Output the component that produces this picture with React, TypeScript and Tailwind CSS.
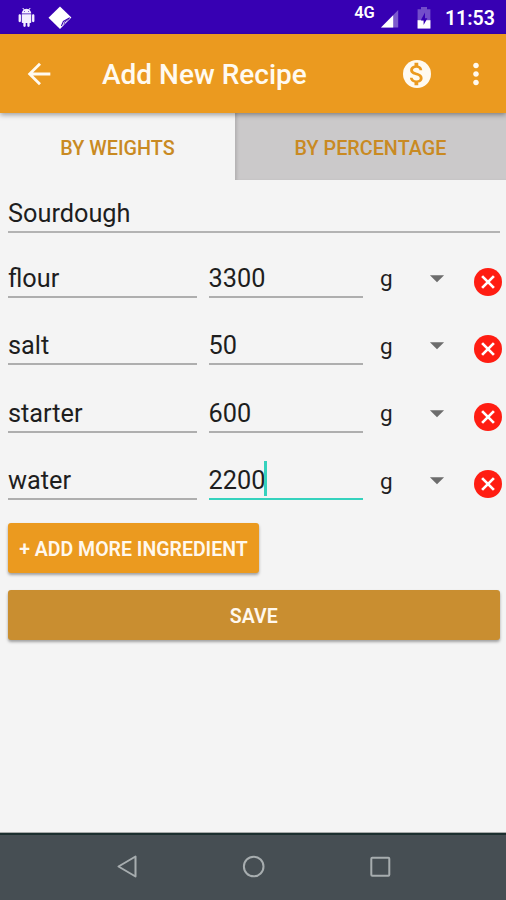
import { useState } from 'react'
import { MdArrowBack, MdArrowDropDown, MdAttachMoney, MdMoreVert } from 'react-icons/md'

const ingredients = [
  { name: 'flour', amount: '3300', unit: 'g' },
  { name: 'salt', amount: '50', unit: 'g' },
  { name: 'starter', amount: '600', unit: 'g' },
  { name: 'water', amount: '2200', unit: 'g' },
]

function StatusBar() {
  return (
    <div className="flex h-[34px] shrink-0 items-start bg-[#3700b3] text-white">
      {/* Notifications */}
      <svg viewBox="0 0 24 24" className="mt-[8px] ml-[16.5px] h-[19px] w-[19px]" fill="#f3efff">
        <path d="M6 18c0 .55.45 1 1 1h1v3.5c0 .83.67 1.5 1.5 1.5s1.5-.67 1.5-1.5V19h2v3.5c0 .83.67 1.5 1.5 1.5s1.5-.67 1.5-1.5V19h1c.55 0 1-.45 1-1V8H6v10zM3.5 8C2.67 8 2 8.67 2 9.5v7c0 .83.67 1.5 1.5 1.5S5 17.33 5 16.5v-7C5 8.67 4.33 8 3.5 8zm17 0c-.83 0-1.5.67-1.5 1.5v7c0 .83.67 1.5 1.5 1.5s1.5-.67 1.5-1.5v-7c0-.83-.67-1.5-1.5-1.5zm-4.97-5.84l1.3-1.3c.2-.2.2-.51 0-.71-.2-.2-.51-.2-.71 0l-1.48 1.48C13.85 1.23 12.95 1 12 1c-.96 0-1.86.23-2.66.63L7.85.15c-.2-.2-.51-.2-.71 0-.2.2-.2.51 0 .71l1.31 1.31C6.97 3.26 6 5.01 6 7h12c0-1.99-.97-3.75-2.47-4.84zM10 5H9V4h1v1zm5 0h-1V4h1v1z" />
      </svg>
      <svg viewBox="0 0 24 24" className="mt-[5.5px] ml-[12px] h-[24px] w-[24px]">
        <path d="M12 .5L23.4 11.4L12 23L.5 11.8z" fill="#fff" />
        <path d="M21.8 11.8L15.4 15.4L13.4 20" fill="none" stroke="#3700b3" strokeWidth="1.1" />
        <path d="M20.8 13.2L17 15.8L15.8 18.6" fill="none" stroke="#3700b3" strokeWidth=".8" />
      </svg>

      {/* Network, battery, clock */}
      <span className="mt-[4px] ml-auto text-[16.5px] leading-[18px] font-semibold">4G</span>
      <svg viewBox="0 0 18 18" className="mt-[9.5px] ml-[6.5px] h-[18px] w-[18px]">
        <path d="M17.2 0V17.5H0z" fill="#fff" fillOpacity=".35" />
        <path d="M12.2 5.2V17.5H0z" fill="#fff" />
      </svg>
      <svg viewBox="0 0 14 22" className="mt-[6.5px] ml-[17.5px] h-[22px] w-[14px]">
        <path d="M4 0h6v2.2h3.4V21.5H.6V2.2H4z" fill="#fff" fillOpacity=".3" />
        <path d="M.6 13.2h12.8v8.3H.6z" fill="#fff" />
        <path d="M8 5.5L4.2 12.6V13.6H6.6V18L10.4 11.2H8z" fill="#3700b3" />
      </svg>
      <span className="mt-[7px] mr-[11px] ml-[14px] text-[19.6px] leading-[24px] font-semibold">11:53</span>
    </div>
  )
}

function AppBar() {
  return (
    <header className="z-10 flex h-[79px] shrink-0 items-center bg-[#eb9a1f] text-[#fffaf0] shadow-[0_2px_5px_rgba(0,0,0,0.35)]">
      <MdArrowBack className="ml-[22px] h-[34px] w-[34px]" />
      <h1 className="mt-[2px] ml-[46px] text-[28px] leading-[34px] font-medium whitespace-nowrap">
        Add New Recipe
      </h1>
      <div className="mr-[28px] ml-auto flex h-[28px] w-[28px] items-center justify-center rounded-full bg-[#fffaf0]">
        <MdAttachMoney className="h-[30px] w-[30px] shrink-0 text-[#eb9a1f]" />
      </div>
      <MdMoreVert className="mr-[13px] h-[34px] w-[34px]" />
    </header>
  )
}

function RemoveIcon() {
  return (
    <svg viewBox="0 0 28 28" className="mt-[15px] -mr-[2px] ml-[20px] h-[28px] w-[28px]">
      <circle cx="14" cy="14" r="14" fill="#ff1d12" />
      <path d="M8.1 8.1L19.9 19.9M19.9 8.1L8.1 19.9" stroke="#fff" strokeWidth="2.7" />
    </svg>
  )
}

function NavigationBar() {
  return (
    <nav className="mt-auto flex h-[67px] shrink-0 items-start border-t-2 border-[#1c2f2f] bg-[#464e53] shadow-[0_-1px_0_#a9abab]">
      <svg viewBox="0 0 506 65" className="h-[65px] w-[506px]" fill="none" stroke="#a7adaf" strokeWidth="2" strokeLinejoin="round">
        <path d="M135.5 21.5V41.5L118.5 31.5z" />
        <circle cx="253.7" cy="31.5" r="9.8" />
        <rect x="371.3" y="22.7" width="18" height="18" rx="1" />
      </svg>
    </nav>
  )
}

export default function App() {
  const [tab, setTab] = useState('weights')

  return (
    <div className="flex h-[900px] w-[506px] flex-col overflow-hidden bg-[#f4f4f4] font-[Roboto,sans-serif]">
      <StatusBar />
      <AppBar />

      {/* Tabs */}
      <div className="flex h-[67px] shrink-0 text-[19.8px] font-medium text-[#c98a22]">
        <button
          onClick={() => setTab('weights')}
          className={`w-[235px] pt-[4px] ${tab === 'weights' ? 'bg-[#f4f4f4]' : 'bg-[#cbc9ca]'}`}
        >
          BY WEIGHTS
        </button>
        <button
          onClick={() => setTab('percentage')}
          className={`flex-1 pt-[4px] ${tab === 'percentage' ? 'bg-[#f4f4f4]' : 'bg-[#cbc9ca] shadow-[inset_3px_0_3px_-1px_rgba(0,0,0,0.12)]'}`}
        >
          BY PERCENTAGE
        </button>
      </div>

      <main className="flex flex-col pr-[6.5px] pl-[8px] text-[25.3px] text-[#1e1e1e]">
        <div className="flex h-[53px] items-end border-b-2 border-[#b3b3b3] pb-[2px] leading-[30px]">
          Sourdough
        </div>

        {/* Ingredients */}
        <div className="mt-[19.9px] flex flex-col gap-[22.5px]">
          {ingredients.map((item) => {
            const focused = item.name === 'water'
            return (
              <div key={item.name} className="flex h-[45px] leading-[30px]">
                <div className="flex w-[189px] items-end border-b-2 border-[#aeaeae] pb-[2px]">
                  {item.name}
                </div>
                <div
                  className={`ml-[12px] flex w-[154px] items-end border-b-2 pb-[2px] ${focused ? 'border-[#35d2bd]' : 'border-[#aeaeae]'}`}
                >
                  <span className="-ml-[0.5px]">{item.amount}</span>
                  {focused && <span className="-ml-[1px] h-[35px] w-[2.5px] bg-[#35d2bd]" />}
                </div>
                <span className="mt-[10.5px] ml-[17px] text-[22.5px]">{item.unit}</span>
                <MdArrowDropDown className="mt-[8px] ml-auto h-[34px] w-[34px] text-[#6c6c6c]" />
                <RemoveIcon />
              </div>
            )
          })}
        </div>

        <button className="mt-[22.6px] h-[50px] w-[251px] rounded-[3px] bg-[#eb9a1f] pt-[3px] text-[19.5px] font-semibold whitespace-nowrap text-[#fff8ee] shadow-[0_2px_3px_rgba(0,0,0,0.35)]">
          + ADD MORE INGREDIENT
        </button>
        <button className="mt-[17px] h-[50px] rounded-[3px] bg-[#c98e30] pt-[3px] text-[19.5px] font-semibold text-[#fff8ee] shadow-[0_2px_3px_rgba(0,0,0,0.35)]">
          SAVE
        </button>
      </main>

      <NavigationBar />
    </div>
  )
}
